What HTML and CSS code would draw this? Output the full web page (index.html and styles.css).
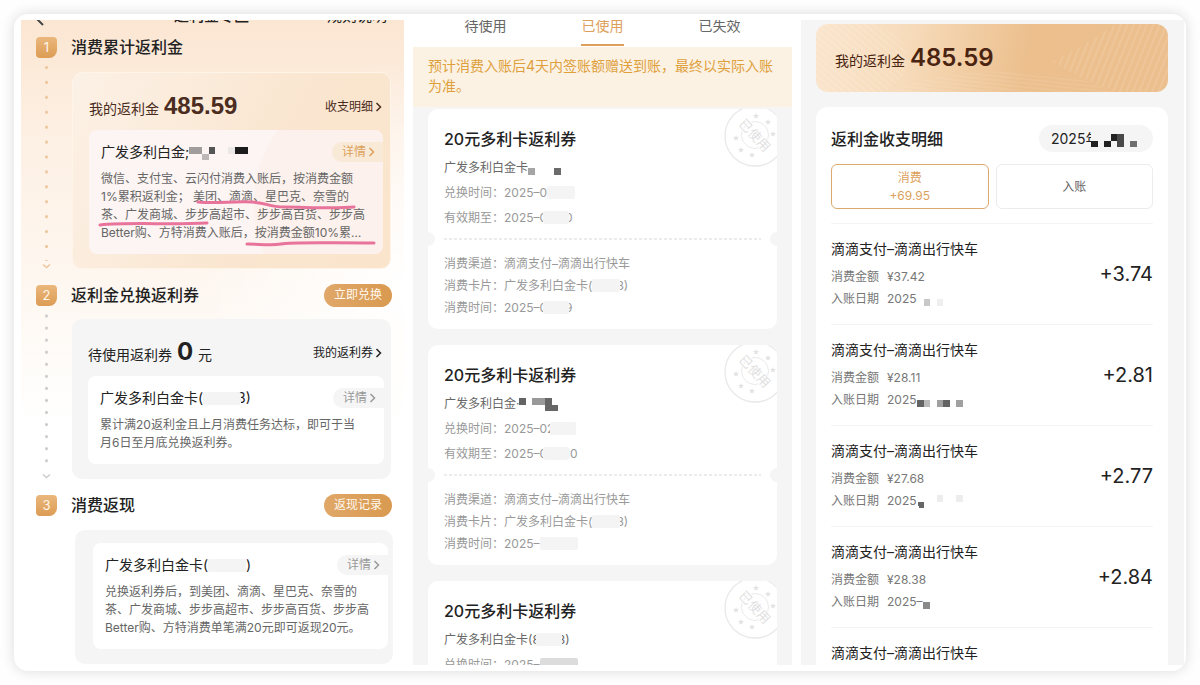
FILE: index.html
```html
<!doctype html>
<html lang="zh-CN">
<head>
    <meta charset="utf-8">
    <meta name="viewport" content="width=device-width, initial-scale=1">
    <title>返利金专区</title>
    <link rel="stylesheet" href="styles.css">
</head>

<body>
<!-- shared shapes -->
<svg class="defs" width="0" height="0" aria-hidden="true">
    <symbol id="arrow" viewBox="0 0 7 10">
        <path d="M1.5 1 L5.5 5 L1.5 9" fill="none" stroke="currentColor" stroke-width="1.5"/>
    </symbol>
    <symbol id="down" viewBox="0 0 9 6">
        <path d="M1 1.5 L4.5 4.5 L8 1.5" fill="none" stroke="currentColor" stroke-width="1.5"/>
    </symbol>
    <symbol id="star" viewBox="-3 -3 6 6">
        <path d="M0 -3 L.8 -1 L3 -.9 L1.3 .5 L1.9 2.6 L0 1.4 L-1.9 2.6 L-1.3 .5 L-3 -.9 L-.8 -1 Z" fill="#e2e2e2"/>
    </symbol>
    <symbol id="stamp" viewBox="0 0 62 62">
        <circle cx="31" cy="31" r="30" fill="none" stroke="#e9e9e9" stroke-width="1.3"/>
        <circle cx="31" cy="30" r="13.5" fill="none" stroke="#e9e9e9"/>
        <use href="#star" x="29" y="8" width="6" height="6"/>
        <use href="#star" x="41" y="14" width="6" height="6"/>
        <use href="#star" x="46" y="26" width="6" height="6"/>
        <use href="#star" x="9" y="30" width="6" height="6"/>
        <use href="#star" x="14" y="42" width="6" height="6"/>
        <use href="#star" x="25" y="47" width="6" height="6"/>
        <text class="stamp-text" x="31" y="35" transform="rotate(47 31 30)" text-anchor="middle">已使用</text>
    </symbol>
</svg>

<main class="sheet">
    <section class="panel rebate">
        <header class="rebate-bar">
            <a class="back" href="#" aria-label="返回"><svg width="8" height="14" viewBox="0 0 8 14"><path d="M1 1 L1 7 L7 13" fill="none" stroke="#444" stroke-width="2"/></svg></a>
            <h1>返利金专区</h1>
            <a href="#">规则说明</a>
        </header>

        <section class="step step-gold">
            <div class="step-head">
                <span class="badge">1</span>
                <h2>消费累计返利金</h2>
            </div>
            <div class="step-body">
                <div class="rail"><svg width="9" height="6"><use href="#down"/></svg></div>
                <div class="box">
                    <div class="box-head">
                        <p>我的返利金 <strong>485.59</strong></p>
                        <a href="#">收支明细<svg width="7" height="10"><use href="#arrow"/></svg></a>
                    </div>
                    <div class="inner">
                        <div class="inner-head">
                            <h3>广发多利白金;<svg class="mosaic" width="59" height="13" viewBox="0 0 9 2">
                                <path fill="#a19d9d" d="M0 0h2v1h-2z"/>
                                <path fill="#555" d="M3 0h1v1h-1z"/>
                                <path fill="#bcb8b8" d="M2 1h1v1h-1z"/>
                                <path fill="#ece8e8" d="M6 0h1v1h-1z"/>
                                <path fill="#1c1c1c" d="M7 0h2v1h-2z"/>
                            </svg></h3>
                            <a class="more" href="#">详情<svg width="7" height="10"><use href="#arrow"/></svg></a>
                        </div>
                        <p>微信、支付宝、云闪付消费入账后&#xFF0C;按消费金额<br>1%累积返利金&#xFF1B; 美团、滴滴、星巴克、奈雪的<br>茶、广发商城、步步高超市、步步高百货、步步高<br>Better购、方特消费入账后&#xFF0C;按消费金额10%累…</p>
                        <svg class="marker" width="296" height="124" viewBox="0 0 296 124">
                            <path d="M109 72 C125 74 145 71 163 72 S177 77 196 77 S245 79 265 77"/>
                            <path d="M11 95 C40 92 80 95 118 93"/>
                            <path d="M158 114 C170 114 182 116 192 114 S230 113 285 113"/>
                        </svg>
                    </div>
                </div>
            </div>
        </section>

        <section class="step step-grey">
            <div class="step-head">
                <span class="badge">2</span>
                <h2>返利金兑换返利券</h2>
                <button type="button">立即兑换</button>
            </div>
            <div class="step-body">
                <div class="rail"><svg width="9" height="6"><use href="#down"/></svg></div>
                <div class="box">
                    <div class="box-head">
                        <p>待使用返利券 <strong>0</strong> 元</p>
                        <a href="#">我的返利券<svg width="7" height="10"><use href="#arrow"/></svg></a>
                    </div>
                    <div class="inner">
                        <div class="inner-head">
                            <h3>广发多利白金卡(<i class="smudge smudge-l"></i>3)</h3>
                            <a class="more" href="#">详情<svg width="7" height="10"><use href="#arrow"/></svg></a>
                        </div>
                        <p>累计满20返利金且上月消费任务达标&#xFF0C;即可于当<br>月6日至月底兑换返利券。</p>
                    </div>
                </div>
            </div>
        </section>

        <section class="step step-last">
            <div class="step-head">
                <span class="badge">3</span>
                <h2>消费返现</h2>
                <button type="button">返现记录</button>
            </div>
            <div class="step-body">
                <div class="box">
                    <div class="inner">
                        <div class="inner-head">
                            <h3>广发多利白金卡(<i class="smudge smudge-l"></i>&nbsp;)</h3>
                            <a class="more" href="#">详情<svg width="7" height="10"><use href="#arrow"/></svg></a>
                        </div>
                        <p>兑换返利券后&#xFF0C;到美团、滴滴、星巴克、奈雪的<br>茶、广发商城、步步高超市、步步高百货、步步高<br>Better购、方特消费单笔满20元即可返现20元。</p>
                    </div>
                </div>
            </div>
        </section>
    </section>

    <section class="panel coupons">
        <nav class="tabs">
            <button type="button">待使用</button>
            <button type="button" class="active">已使用</button>
            <button type="button">已失效</button>
        </nav>
        <p class="notice">预计消费入账后4天内签账额赠送到账&#xFF0C;最终以实际入账<br>为准。</p>
        <div class="coupon-list">
            <article class="coupon">
                <svg class="stamp" width="62" height="62"><use href="#stamp"/></svg>
                <h2>20元多利卡返利券</h2>
                <p class="card-name">广发多利白金卡<svg class="mosaic" width="33" height="7" viewBox="0 0 5 1">
                    <path fill="#a5a5a5" d="M0 0h1v1h-1z"/>
                    <path fill="#6b6b6b" d="M4 0h1v1h-1z"/>
                </svg></p>
                <p>兑换时间&#xFF1A;2025–0<i class="smudge smudge-m"></i></p>
                <p>有效期至&#xFF1A;2025–0<i class="smudge smudge-s"></i>0</p>
                <hr>
                <div class="usage">
                    <p>消费渠道&#xFF1A;滴滴支付–滴滴出行快车</p>
                    <p>消费卡片&#xFF1A;广发多利白金卡(<i class="smudge smudge-m"></i>3)</p>
                    <p>消费时间&#xFF1A;2025–0<i class="smudge smudge-s"></i>9</p>
                </div>
            </article>
            <article class="coupon">
                <svg class="stamp" width="62" height="62"><use href="#stamp"/></svg>
                <h2>20元多利卡返利券</h2>
                <p class="card-name">广发多利白金·<svg class="mosaic" width="46" height="13" viewBox="0 0 7 2">
                    <path fill="#646464" d="M0 0h1v1h-1z"/>
                    <path fill="#999" d="M2 0h2v1h-2z"/>
                    <path fill="#666" d="M4 0h1v1h1v1h-2z"/>
                </svg></p>
                <p>兑换时间&#xFF1A;2025–02<i class="smudge smudge-s"></i></p>
                <p>有效期至&#xFF1A;2025–0<i class="smudge smudge-s"></i>10</p>
                <hr>
                <div class="usage">
                    <p>消费渠道&#xFF1A;滴滴支付–滴滴出行快车</p>
                    <p>消费卡片&#xFF1A;广发多利白金卡(<i class="smudge smudge-m"></i>3)</p>
                    <p>消费时间&#xFF1A;2025–<i class="smudge smudge-l"></i></p>
                </div>
            </article>
            <article class="coupon">
                <svg class="stamp" width="62" height="62"><use href="#stamp"/></svg>
                <h2>20元多利卡返利券</h2>
                <p class="card-name">广发多利白金卡(8<i class="smudge smudge-s"></i>3)</p>
                <p>兑换时间&#xFF1A;2025–<i class="smudge smudge-l smudge-dark"></i></p>
            </article>
        </div>
    </section>

    <section class="panel ledger">
        <div class="balance">
            <svg class="waves" viewBox="0 0 352 68" preserveAspectRatio="none" aria-hidden="true">
                <defs>
                    <pattern id="steep" width="6" height="10" patternUnits="userSpaceOnUse" patternTransform="rotate(22)">
                        <path d="M1 0V10" stroke="#fff" stroke-opacity=".14" stroke-width="1.5"/>
                    </pattern>
                    <pattern id="flat" width="10" height="4" patternUnits="userSpaceOnUse" patternTransform="rotate(6)">
                        <path d="M0 1H10" stroke="#fff" stroke-opacity=".14"/>
                    </pattern>
                    <pattern id="slant" width="5" height="10" patternUnits="userSpaceOnUse" patternTransform="rotate(-50)">
                        <path d="M1 0V10" stroke="#fff" stroke-opacity=".2"/>
                    </pattern>
                </defs>
                <path d="M352 0H300Q268 22 236 38Q262 54 300 68H352Z" fill="url(#steep)"/>
                <path d="M70 68Q150 36 262 54L300 68Z" fill="url(#flat)"/>
                <path d="M0 0H60Q120 30 70 68H0Z" fill="url(#slant)"/>
            </svg>
            <p>我的返利金 <strong>485.59</strong></p>
        </div>

        <div class="records">
            <div class="records-head">
                <h2>返利金收支明细</h2>
                <button type="button" class="month">2025年<svg class="mosaic" width="46" height="13" viewBox="0 0 7 2">
                    <path fill="#222" d="M0 1h1v1h-1zM2 1h1v1h-1zM3 0h1v1h-1z"/>
                    <path fill="#4a4a4a" d="M4 0h1v2h-1z"/>
                    <path fill="#707070" d="M6 1h1v1h-1z"/>
                </svg></button>
            </div>
            <div class="filters">
                <button type="button" class="active">消费<br>+69.95</button>
                <button type="button">入账</button>
            </div>
            <ul>
                <li>
                    <div>
                        <h3>滴滴支付–滴滴出行快车</h3>
                        <p><span>消费金额</span>¥37.42</p>
                        <p><span>入账日期</span>2025<svg class="mosaic" width="26" height="7" viewBox="0 0 4 1">
                            <path fill="#c8c8c8" d="M1 0h1v1h-1z"/>
                            <path fill="#efefef" d="M3 0h1v1h-1z"/>
                        </svg></p>
                    </div>
                    <b>+3.74</b>
                </li>
                <li>
                    <div>
                        <h3>滴滴支付–滴滴出行快车</h3>
                        <p><span>消费金额</span>¥28.11</p>
                        <p><span>入账日期</span>2025<svg class="mosaic" width="46" height="7" viewBox="0 0 7 1">
                            <path fill="#636363" d="M0 0h1v1h-1zM4 0h1v1h-1z"/>
                            <path fill="#b9b9b9" d="M1 0h1v1h-1z"/>
                            <path fill="#a0a0a0" d="M3 0h1v1h-1zM6 0h1v1h-1z"/>
                        </svg></p>
                    </div>
                    <b>+2.81</b>
                </li>
                <li>
                    <div>
                        <h3>滴滴支付–滴滴出行快车</h3>
                        <p><span>消费金额</span>¥27.68</p>
                        <p><span>入账日期</span>2025<svg class="mosaic" width="46" height="13" viewBox="0 0 7 2">
                            <path fill="#666" d="M0 1h1v1h-.7z"/>
                            <path fill="#ededed" d="M3 0h1v1h-1zM6 0h1v1h-1z"/>
                        </svg></p>
                    </div>
                    <b>+2.77</b>
                </li>
                <li>
                    <div>
                        <h3>滴滴支付–滴滴出行快车</h3>
                        <p><span>消费金额</span>¥28.38</p>
                        <p><span>入账日期</span>2025–<svg class="mosaic" width="7" height="7" viewBox="0 0 1 1">
                            <path fill="#8a8a8a" d="M0 0h1v1h-1z"/>
                        </svg></p>
                    </div>
                    <b>+2.84</b>
                </li>
                <li>
                    <div>
                        <h3>滴滴支付–滴滴出行快车</h3>
                    </div>
                </li>
            </ul>
        </div>
    </section>
</main>
</body>
</html>
```

FILE: styles.css
```css
* {
    box-sizing: border-box;
    margin: 0;
    padding: 0;
}
body {
    background: #fefefe;
    color: #222;
    font: 12px/18px Inter, "Noto Sans CJK SC", sans-serif;
}
a {
    color: inherit;
    text-decoration: none;
}
button {
    border: 0;
    background: none;
    color: inherit;
    font: inherit;
}
h1, h2, h3, b {
    font-weight: 400;
}
ul {
    list-style: none;
}
.defs {
    position: absolute;
}

/* three phone screens side by side, cut off at the bottom */
.sheet {
    display: grid;
    grid-template-columns: 383fr 379fr 383fr;
    grid-template-rows: 100%;
    gap: 9px;
    height: calc(100vh - 28px);
    margin: 14px;
    padding: 6px 2px 6px 7px;
    border-radius: 14px;
    background: #fff;
    box-shadow: 0 0 14px rgba(0, 0, 0, .14);
}
.panel {
    min-width: 0;
    overflow: hidden;
}
.mosaic {
    shape-rendering: crispEdges;
    vertical-align: -3px;
}
.smudge {
    display: inline-block;
    position: relative;
    height: 13px;
    margin-right: -4px;
    border-radius: 2px;
    background: #f4f4f4;
    vertical-align: -2px;
}
.smudge-s {
    width: 26px;
    margin-left: -4px;
}
.smudge-m {
    width: 28px;
}
.smudge-l {
    width: 38px;
}
.smudge-dark {
    background: #dcdcdc;
}

/* left: rebate steps */
.rebate {
    padding-right: 13px;
    padding-left: 15px;
    background:
        radial-gradient(ellipse 200px 230px at 100% 270px, #fff, rgba(255, 255, 255, 0)),
        linear-gradient(#fbe6d2, #fdf0e4 120px, #fef8f2 280px, #fff 400px);
}
.rebate-bar {
    display: flex;
    align-items: flex-end;
    justify-content: space-between;
    height: 6px;
    margin-right: 4px;
    margin-bottom: 9px;
    font-size: 15px;
    line-height: 20px;
}
.rebate-bar h1 {
    margin-left: 52px;
    font-size: 15px;
    font-weight: 500;
}
.back svg {
    display: block;
}
.step {
    margin-bottom: 14px;
}
.step-head {
    display: flex;
    align-items: center;
    height: 24px;
}
.step-head h2 {
    flex: 1;
    margin-left: 14px;
    font-size: 16px;
    font-weight: 500;
    line-height: 24px;
}
.step-head button {
    width: 68px;
    height: 23px;
    margin-right: -1px;
    border-radius: 12px;
    background: linear-gradient(90deg, #e0a768, #d99a50);
    color: #fff8ee;
}
.badge {
    width: 21px;
    height: 21px;
    border-radius: 4px 4px 8px 4px;
    background: linear-gradient(#eab77c, #dc9c54);
    color: #fff6ea;
    font-size: 13px;
    line-height: 21px;
    text-align: center;
}
.step-body {
    display: flex;
    gap: 15px;
}
.rail {
    display: flex;
    align-items: flex-end;
    justify-content: center;
    width: 21px;
    margin-top: 1px;
    padding-bottom: 8px;
    background: radial-gradient(circle, currentColor 1px, transparent 2px) center top / 21px 15px;
    background-clip: content-box;
    background-repeat: no-repeat round;
    color: #ecc69c;
}
.rail svg {
    margin-bottom: -8px;
}
.box {
    flex: 1;
    margin-top: 12px;
    padding: 16px 7px 15px 16px;
    border-radius: 10px;
    background: #f5f5f5;
}
.box-head {
    display: flex;
    align-items: center;
    justify-content: space-between;
    height: 34px;
    margin-bottom: 7px;
    padding-top: 2px;
    padding-right: 2px;
}
.box-head p {
    font-size: 14px;
    line-height: 32px;
}
.box-head strong {
    margin: 0 1px;
    font-size: 24px;
    font-weight: 700;
}
.box-head a svg {
    margin-left: 2px;
    vertical-align: -1px;
}
.inner {
    position: relative;
    padding: 12px 0 12px 12px;
    border-radius: 8px;
    background: #fff;
}
.inner-head {
    display: flex;
    align-items: center;
    justify-content: space-between;
    height: 20px;
    margin-bottom: 8px;
}
.inner h3 {
    font-size: 14px;
    line-height: 20px;
    white-space: nowrap;
}
.inner p {
    color: #666;
    white-space: nowrap;
}
.more {
    width: 51px;
    height: 20px;
    padding-left: 10px;
    border-radius: 10px 0 0 10px;
    background: #f5f5f5;
    color: #999;
    line-height: 20px;
}
.more svg {
    margin-left: 2px;
    vertical-align: -1px;
}
.marker {
    position: absolute;
    top: 0;
    left: 0;
    fill: none;
    stroke: #e8749c;
    stroke-width: 3;
    stroke-linecap: round;
}
.step-gold .box {
    margin-top: 13px;
    padding-bottom: 14px;
    border: 1px solid #fff4e8;
    background: linear-gradient(115deg, #fcf1e6, #fae6d0 60%, #fae4cc);
    color: #4a2c20;
}
.step-gold .box-head {
    padding-right: 1px;
}
.step-gold .box-head strong {
    font-family: "Liberation Sans", sans-serif;
}
.step-gold .inner {
    background: radial-gradient(circle at 100% 60%, #fcf1ec 128px, #fcf5f3 130px);
}
.step-gold h3 {
    color: #222;
}
.step-gold .more {
    background: #f9ead8;
    color: #dc9f5c;
}
.step-grey .rail {
    margin-top: 3px;
    background-size: 21px 12px;
    color: #ccc;
}
.step-last .box {
    margin-top: 13px;
    margin-right: -2px;
    margin-left: 39px;
    padding: 13px 5px 15px 18px;
}

/* middle: used coupons */
.coupons {
    background: #f5f5f5;
}
.tabs {
    display: flex;
    justify-content: center;
    height: 27px;
    background: #fff;
    color: #666;
    font-size: 14px;
    line-height: 12px;
}
.tabs button {
    width: 43px;
    height: 26px;
    margin: 0 37px;
    padding-bottom: 12px;
    border-bottom: 2px solid transparent;
    white-space: nowrap;
}
.tabs .active {
    border-color: #dc9f5c;
    color: #dc9f5c;
}
.notice {
    padding: 9px 15px 11px;
    background: #fbf2e4;
    color: #dfa03c;
    font-size: 14px;
    line-height: 20px;
    white-space: nowrap;
}
.coupon-list {
    padding: 2px 15px;
}
.coupon {
    position: relative;
    margin-bottom: 16px;
    padding: 18px 16px 10px;
    border-radius: 10px;
    overflow: hidden;
    background: #fff;
    color: #999;
    line-height: 25px;
}
.coupon h2 {
    margin-bottom: 4px;
    color: #222;
    font-size: 16px;
    font-weight: 500;
    line-height: 24px;
}
.coupon .card-name {
    color: #666;
}
.coupon p {
    white-space: nowrap;
}
.coupon hr {
    position: relative;
    height: 2px;
    margin: 8px 0 13px;
    border: 0;
    overflow: visible;
    background: repeating-linear-gradient(90deg, #ececec 0 3px, transparent 3px 5px);
}
.coupon hr::before,
.coupon hr::after {
    content: "";
    position: absolute;
    top: -6px;
    left: -23px;
    width: 14px;
    height: 14px;
    border-radius: 50%;
    background: #f5f5f5;
}
.coupon hr::after {
    right: -23px;
    left: auto;
}
.usage {
    line-height: 22px;
}
.stamp {
    position: absolute;
    top: -4px;
    right: -9px;
}
.stamp-text {
    fill: #dfdfdf;
    stroke: #fff;
    stroke-width: 2px;
    font-size: 13px;
    paint-order: stroke;
}

/* right: rebate ledger */
.ledger {
    padding: 4px 16px 0 15px;
    background: #f5f5f5;
}
.balance {
    position: relative;
    height: 68px;
    margin-bottom: 15px;
    padding: 18px 19px;
    border-radius: 12px;
    overflow: hidden;
    background: linear-gradient(100deg, #fae5cd, #f7dcbc 25%, #ecbf8d 60%, #ecbf8e);
    color: #4a2410;
}
.balance p {
    position: relative;
    font-size: 14px;
    line-height: 32px;
}
.balance strong {
    margin-left: 1px;
    font-size: 24px;
    font-weight: 600;
}
.waves {
    position: absolute;
    top: 0;
    left: 0;
    width: 100%;
    height: 100%;
}
.records {
    padding: 18px 15px;
    border-radius: 12px;
    background: #fff;
}
.records-head {
    display: flex;
    align-items: center;
    justify-content: space-between;
    margin-bottom: 12px;
}
.records-head h2 {
    font-size: 16px;
    font-weight: 500;
}
.month {
    width: 114px;
    height: 27px;
    padding-left: 12px;
    border-radius: 14px;
    background: #f5f5f5;
    font-size: 14px;
    text-align: left;
    white-space: nowrap;
}
/* the tiles hide the right half of the last character */
.month .mosaic {
    margin-left: -8px;
    background: #f5f5f5;
}
.filters {
    display: flex;
    gap: 7px;
    margin-bottom: 14px;
}
.filters button {
    flex: 1;
    height: 45px;
    border: 1px solid #ececec;
    border-radius: 6px;
    color: #666;
}
.filters .active {
    border-color: #dcaa6c;
    color: #dc9f5c;
}
.records li {
    display: flex;
    align-items: center;
    justify-content: space-between;
    padding: 14px 0;
    border-top: 1px solid #f4f4f4;
}
.records h3 {
    margin-bottom: 6px;
    font-size: 14px;
    line-height: 22px;
}
.records p {
    height: 22px;
    color: #777;
    line-height: 22px;
}
.records p span {
    margin-right: 8px;
}
.records b {
    font-size: 20px;
    line-height: 24px;
}
```
